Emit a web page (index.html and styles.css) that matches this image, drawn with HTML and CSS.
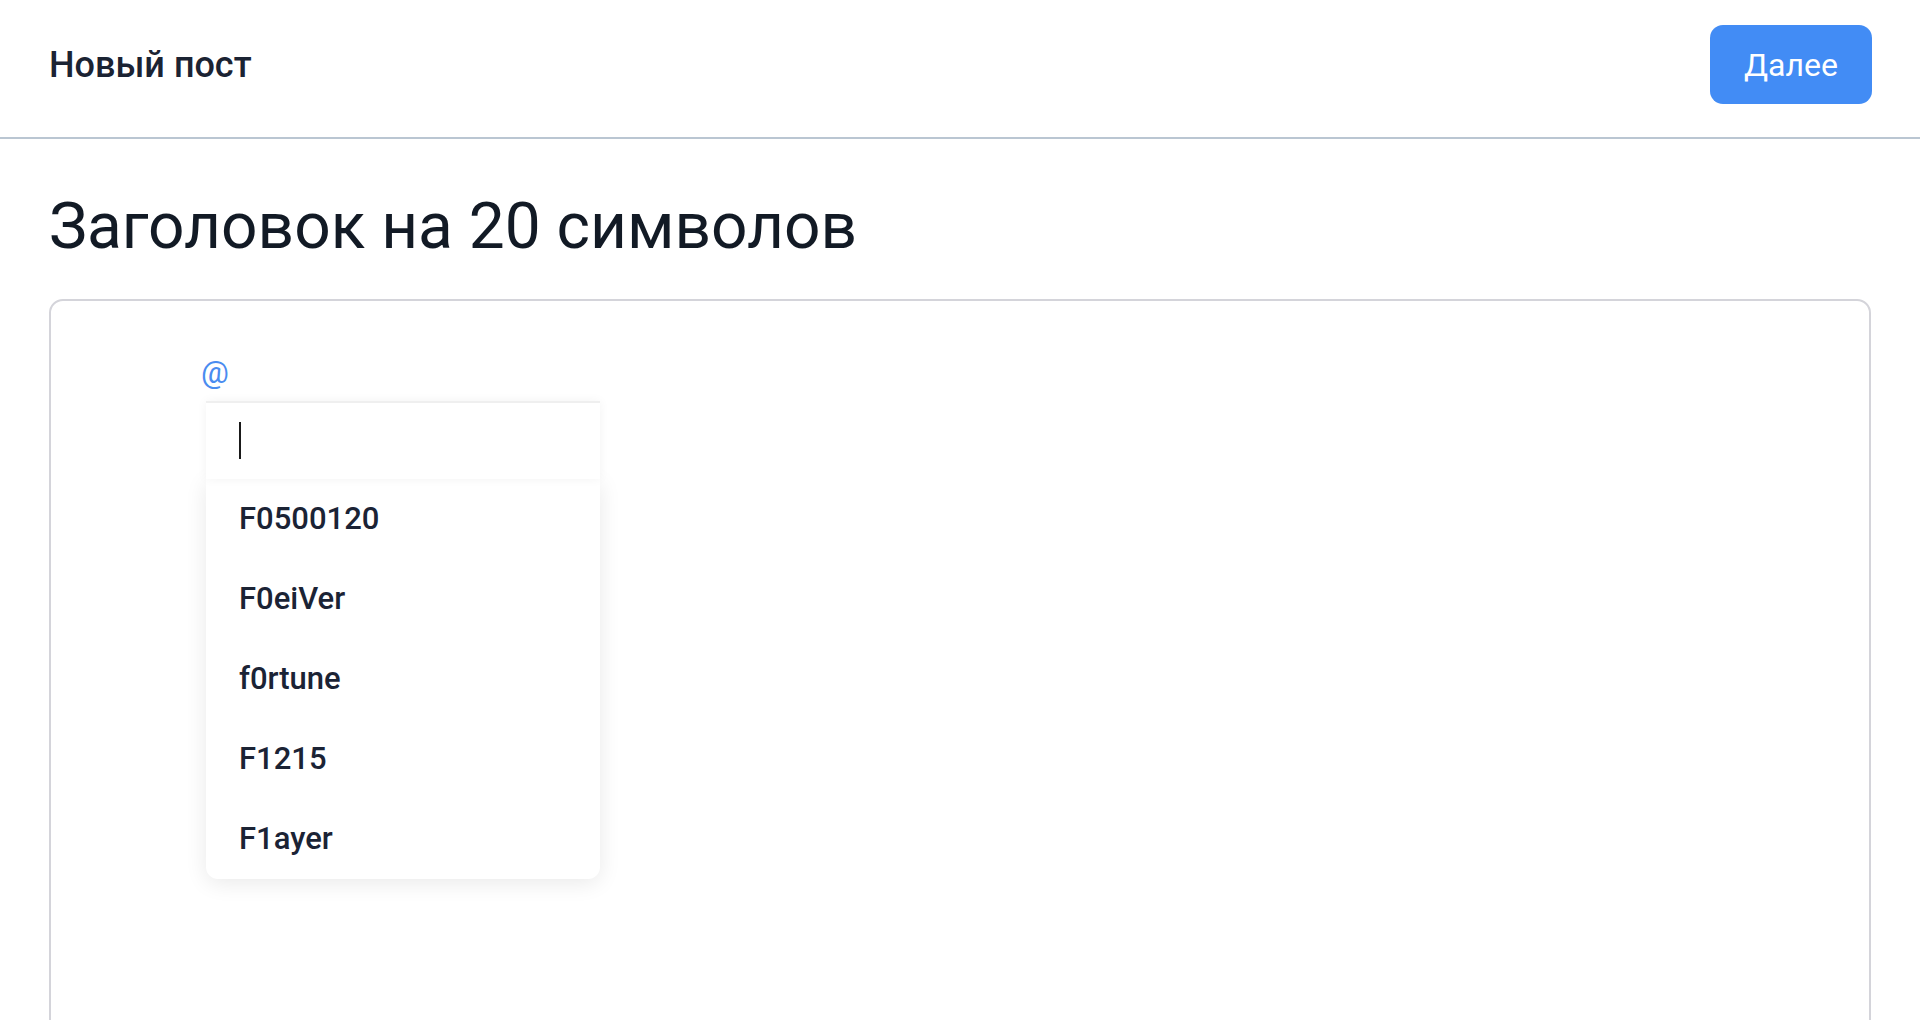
FILE: index.html
```html
<!DOCTYPE html>
<html>
	<head>
		<meta charset="UTF-8">
		<title>Новый пост</title>
		<link rel="stylesheet" href="styles.css">
	</head>
	<body>
		<!--шапка-->
		<div class="header">
			<span class="header-title">Новый пост</span>
			<a href="#" class="btn-next">Далее</a>
		</div>

		<div class="main">
			<h1 class="post-title">Заголовок на 20 символов</h1>

			<!--редактор-->
			<div class="editor">
				<div class="mention">
					<span class="mention-at">@</span>
					<!--список пользователей-->
					<div class="mention-menu">
						<div class="mention-search"><span class="caret"></span></div>
						<ul class="mention-list">
							<li>F0500120</li>
							<li>F0eiVer</li>
							<li>f0rtune</li>
							<li>F1215</li>
							<li>F1ayer</li>
						</ul>
					</div>
				</div>
			</div>
		</div>
	</body>
</html>
```

FILE: styles.css
```css
*{
	padding: 0;
	margin: 0;
	box-sizing: border-box;
}
a{
	text-decoration: none;
}
body{
	font-family: Roboto, "Noto Sans", sans-serif;
	background-color: #FFFFFF;
	color: #131b26;
	overflow: hidden;
}

.header{
	display: flex;
	justify-content: space-between;
	align-items: center;
	padding: 25px 48px 33px 49px;
	border-bottom: 2px solid #bac6d2;
}
.header-title{
	font-size: 36px;
	font-weight: 500;
	color: #1b2333;
}
.btn-next{
	display: flex;
	align-items: center;
	justify-content: center;
	width: 162px;
	height: 79px;
	border-radius: 13px;
	background-color: #428cf5;
	color: #FFFFFF;
	font-size: 32px;
}

.main{
	padding: 0 49px;
}
.post-title{
	margin-top: 49px;
	margin-bottom: 34px;
	font-size: 64px;
	font-weight: 400;
	line-height: 77px;
	color: #121a25;
}

.editor{
	height: 760px;
	border: 2px solid #d4d4da;
	border-radius: 14px;
	padding: 49px 0 0 150px;
}
.mention{
	position: relative;
	font-size: 31px;
	line-height: 45px;
}
.mention-at{
	color: #4a8cf0;
}

.mention-menu{
	position: absolute;
	top: 51px;
	left: 5px;
	width: 394px;
	z-index: 10;
}
.mention-search{
	position: relative;
	height: 78px;
	background-color: #FFFFFF;
	border-top: 2px solid #efefef;
	box-shadow: 0 0 10px rgba(0,0,0,0.05);
}
.mention-search .caret{
	position: absolute;
	left: 33px;
	top: 19px;
	width: 2px;
	height: 37px;
	background-color: #1a1a1a;
}
.mention-list{
	list-style: none;
	background-color: #FFFFFF;
	border-radius: 0 0 12px 12px;
	box-shadow: 0 4px 22px rgba(0,0,0,0.09);
}
.mention-list li{
	height: 80px;
	line-height: 80px;
	padding-left: 33px;
	font-size: 31px;
	font-weight: 500;
	color: #1b2335;
}
```
